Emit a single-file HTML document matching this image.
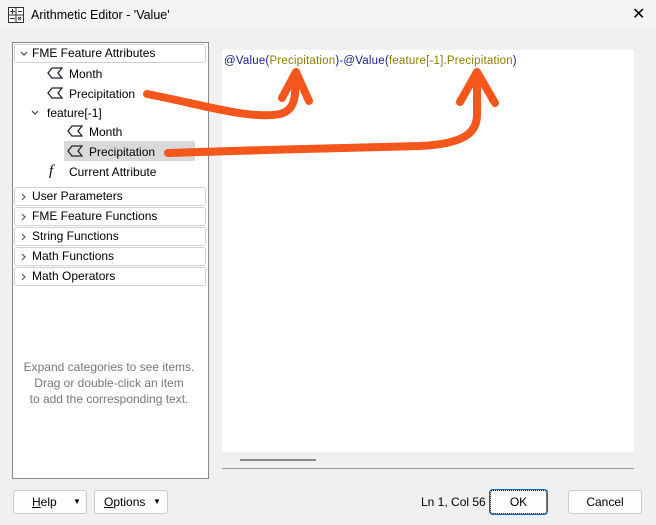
<!DOCTYPE html>
<html><head><style>
body{margin:0;width:656px;height:525px;background:#f0f0f0;font-family:"Liberation Sans",sans-serif;font-size:12px;color:#000;position:relative;overflow:hidden}
.a{position:absolute;white-space:nowrap}
.cat{position:absolute;left:14px;width:190px;height:17px;border:1px solid #d0d0d0;border-radius:3px;background:#fff;line-height:17px}
.cat span{position:absolute;left:17px}
.cat svg{position:absolute;left:4px;top:4px}
.btn{position:absolute;height:22px;border:1px solid #ccc;border-radius:3px;background:#fdfdfd;line-height:22px;text-align:center}
</style></head><body>
<div class="a" style="left:0;top:0;width:656px;height:30px;background:#f3f3f3"></div>
<svg class="a" style="left:8px;top:7px" width="16" height="16"><rect x="0.5" y="0.5" width="15" height="15" fill="#fff" stroke="#333"/><path d="M8 1V15M1 8H15M2 4.5H7M4.5 2V7M10 4.5H14M2 11.5H7M10 10l3 3M13 10l-3 3" stroke="#333" fill="none"/></svg>
<div class="a" style="left:31px;top:8px;font-size:12.5px">Arithmetic Editor - 'Value'</div>
<div class="a" style="left:632px;top:4px;font-size:16px">✕</div>

<div class="a" style="left:12px;top:42px;width:195px;height:435px;background:#fff;border:1px solid #888"></div>
<div class="cat" style="top:44px"><svg width="10" height="10"><path d="M2 3l3 3 3-3" stroke="#444" fill="none" stroke-width="1.2"/></svg><span>FME Feature Attributes</span></div>
<svg class="a" style="left:47px;top:67px" width="16" height="12"><path d="M15 1H5L1 6l4 5h10L11 6z" fill="none" stroke="#223" stroke-width="1.3"/></svg>
<div class="a" style="left:69px;top:67px">Month</div>
<svg class="a" style="left:47px;top:87px" width="16" height="12"><path d="M15 1H5L1 6l4 5h10L11 6z" fill="none" stroke="#223" stroke-width="1.3"/></svg>
<div class="a" style="left:69px;top:87px">Precipitation</div>
<svg class="a" style="left:30px;top:108px" width="10" height="10"><path d="M2 3l3 3 3-3" stroke="#444" fill="none" stroke-width="1.2"/></svg>
<div class="a" style="left:47px;top:106px">feature[-1]</div>
<svg class="a" style="left:67px;top:125px" width="16" height="12"><path d="M15 1H5L1 6l4 5h10L11 6z" fill="none" stroke="#223" stroke-width="1.3"/></svg>
<div class="a" style="left:89px;top:125px">Month</div>
<div class="a" style="left:64px;top:141px;width:131px;height:20px;background:#d9d9d9"></div>
<svg class="a" style="left:67px;top:145px" width="16" height="12"><path d="M15 1H5L1 6l4 5h10L11 6z" fill="none" stroke="#223" stroke-width="1.3"/></svg>
<div class="a" style="left:89px;top:145px">Precipitation</div>
<div class="a" style="left:49px;top:163px;font-family:'Liberation Serif',serif;font-style:italic;font-size:15px">f</div>
<div class="a" style="left:69px;top:165px">Current Attribute</div>
<div class="cat" style="top:187px"><svg width="10" height="10"><path d="M3 2l3 3-3 3" stroke="#555" fill="none" stroke-width="1.2"/></svg><span>User Parameters</span></div>
<div class="cat" style="top:207px"><svg width="10" height="10"><path d="M3 2l3 3-3 3" stroke="#555" fill="none" stroke-width="1.2"/></svg><span>FME Feature Functions</span></div>
<div class="cat" style="top:227px"><svg width="10" height="10"><path d="M3 2l3 3-3 3" stroke="#555" fill="none" stroke-width="1.2"/></svg><span>String Functions</span></div>
<div class="cat" style="top:247px"><svg width="10" height="10"><path d="M3 2l3 3-3 3" stroke="#555" fill="none" stroke-width="1.2"/></svg><span>Math Functions</span></div>
<div class="cat" style="top:267px"><svg width="10" height="10"><path d="M3 2l3 3-3 3" stroke="#555" fill="none" stroke-width="1.2"/></svg><span>Math Operators</span></div>
<div class="a" style="left:14px;top:359px;width:190px;text-align:center;color:#777;line-height:16px">Expand categories to see items.<br>Drag or double-click an item<br>to add the corresponding text.</div>

<div class="a" style="left:222px;top:50px;width:412px;height:402px;background:#fff"></div>
<div class="a" style="left:222px;top:452px;width:412px;height:16px;background:#f0f0f0;border-bottom:1px solid #999"></div>
<div class="a" style="left:240px;top:459px;width:76px;height:2px;background:#888"></div>
<div class="a" style="left:224px;top:55px;font-size:11.5px;letter-spacing:0.2px;color:#1a1a8c">@Value(<span style="color:#8a7d00">Precipitation</span>)-@Value(<span style="color:#8a7d00">feature[-1].Precipitation</span>)</div>

<svg class="a" style="left:0;top:0" width="656" height="525"><g fill="none" stroke="#f4561c" stroke-width="8" stroke-linecap="round" stroke-linejoin="round">
<path d="M147 94C200 104 250 120 280 114C296 110 296 95 295 74M282 98L296 72L309 101"/>
<path d="M168 153C250 150 350 148 420 146C465 144 477 132 477 115L477 73M460 102L477 72L495 103"/>
</g></svg>

<div class="btn" style="left:13px;top:490px;width:72px"><span style="position:absolute;left:18px"><u>H</u>elp</span><span style="position:absolute;left:59px;font-size:8px">▼</span></div>
<div class="btn" style="left:94px;top:490px;width:72px"><span style="position:absolute;left:9px"><u>O</u>ptions</span><span style="position:absolute;left:58px;font-size:8px">▼</span></div>
<div class="a" style="left:421px;top:495px">Ln 1, Col 56</div>
<div class="btn" style="left:490px;top:490px;width:55px;border:1px dotted #000;box-shadow:0 0 0 1px #0067c0">OK</div>
<div class="btn" style="left:568px;top:490px;width:72px">Cancel</div>
</body></html>
